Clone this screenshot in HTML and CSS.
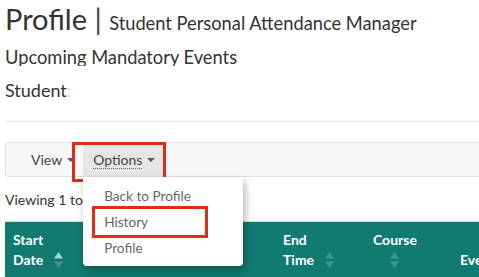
FILE: index.html
```html
<!DOCTYPE html>
<html lang="en">
<head>
    <meta charset="UTF-8">
    <title>Profile | Student Personal Attendance Manager</title>
    <link rel="stylesheet" href="styles.css">
</head>
<body>
    <div class="page">
        <h1 class="page-title">Profile <span class="sep">|</span> <small>Student Personal Attendance Manager</small></h1>
        <h4 class="section-title">Upcoming Mandatory Events</h4>
        <div class="student-line">Student<span class="colon">:</span></div>
        <hr class="rule">

        <div class="toolbar">
            <div class="tool">View <span class="caret"></span></div>
            <div class="tool active">
                <span class="dotted">Options</span> <span class="caret"></span>
                <span class="mark mark-options"></span>
                <ul class="dropdown">
                    <li>Back to Profile</li>
                    <li>History</li>
                    <li>Profile</li>
                    <span class="mark mark-history"></span>
                </ul>
            </div>
        </div>

        <div class="viewing">Viewing 1 to 1 of 1 entries</div>

        <div class="table-head">
            <div class="th c1">
                <span>Start<br>Date</span>
                <svg class="sort" width="9" height="16" viewBox="0 0 9 16"><path d="M4.5 0 L9 6.5 L0 6.5 Z" fill="#a6d6ce"/><path d="M4.5 16 L9 9.5 L0 9.5 Z" fill="#3e978c"/></svg>
            </div>
            <div class="th c3">
                <span>End<br>Time</span>
                <svg class="sort" width="9" height="16" viewBox="0 0 9 16"><path d="M4.5 0 L9 6.5 L0 6.5 Z" fill="#3e978c"/><path d="M4.5 16 L9 9.5 L0 9.5 Z" fill="#3e978c"/></svg>
            </div>
            <div class="th c4">
                <div class="stack">
                    <span>Course</span>
                    <svg class="sort" width="9" height="16" viewBox="0 0 9 16"><path d="M4.5 0 L9 6.5 L0 6.5 Z" fill="#3e978c"/><path d="M4.5 16 L9 9.5 L0 9.5 Z" fill="#3e978c"/></svg>
                </div>
            </div>
            <div class="th c5">
                <span>&nbsp;<br>Event</span>
            </div>
        </div>
    </div>
</body>
</html>
```
FILE: styles.css
```css
body {
    margin: 0;
    padding: 0;
    background: #fff;
    font-family: Lato, "Open Sans", sans-serif;
    color: #333;
    overflow: hidden;
}
.page {
    padding-left: 5px;
    overflow: hidden;
}
.page-title {
    margin: 0;
    padding-top: 2px;
    font-size: 29px;
    font-weight: 400;
    line-height: 34px;
    white-space: nowrap;
}
.page-title .sep {
    font-weight: 400;
    color: #444;
}
.page-title small {
    font-size: 18.3px;
}
.section-title {
    margin: 8px 0 0;
    font-size: 18.3px;
    font-weight: 400;
    line-height: 19px;
    height: 18px;
    overflow: hidden;
}
.student-line {
    margin-top: 14px;
    font-size: 18px;
    line-height: 20px;
}
.colon {
    color: #d4d4d4;
}
.rule {
    margin: 21px 0 0;
    border: 0;
    border-top: 1px solid #e6e6e6;
}

/* toolbar */
.toolbar {
    margin-top: 20px;
    height: 33px;
    background: #f7f7f7;
    border: 1px solid #e2e2e2;
    border-right: 0;
    border-radius: 4px 0 0 4px;
    display: flex;
    padding-left: 15px;
}
.tool {
    position: relative;
    display: flex;
    align-items: center;
    padding: 0 8px 0 10px;
    font-size: 14px;
    color: #444;
    white-space: nowrap;
}
.tool.active {
    background: #e6e6e6;
    padding: 0 11px 0 10px;
}
.caret {
    display: inline-block;
    width: 0;
    height: 0;
    margin-left: 5px;
    border-left: 4px solid transparent;
    border-right: 4px solid transparent;
    border-top: 4px solid #555;
}
.dotted {
    border-bottom: 1px dotted #666;
    line-height: 16px;
    margin-top: 2px;
}
.mark {
    position: absolute;
    border: 3px solid #e12c14;
    box-sizing: border-box;
}
.mark-options {
    left: -11px;
    top: -1px;
    width: 94px;
    height: 40px;
}
.dropdown {
    position: absolute;
    top: 34px;
    left: 0;
    width: 160px;
    margin: 0;
    padding: 6px 0 5px;
    list-style: none;
    background: #fff;
    border-radius: 0 0 4px 4px;
    box-shadow: 2px 4px 8px rgba(0, 0, 0, 0.3);
    z-index: 5;
}
.dropdown li {
    padding: 3px 21px;
    font-size: 13.6px;
    line-height: 20px;
    color: #666;
}
.mark-history {
    left: 9px;
    top: 29px;
    width: 116px;
    height: 32px;
}

.viewing {
    margin-top: 13px;
    font-size: 14px;
    line-height: 20px;
}

/* table header */
.table-head {
    margin-top: 11px;
    border-top: 1px solid #ddd;
    background: #127b71;
    display: flex;
    height: 60px;
    color: #fff;
    font-size: 14px;
    font-weight: 700;
    white-space: nowrap;
}
.th {
    box-sizing: border-box;
    flex-shrink: 0;
    display: flex;
    align-items: flex-start;
    padding: 8px 8px 0;
    line-height: 20px;
}
.sort {
    margin-left: 11px;
    margin-top: 22px;
}
.stack {
    display: flex;
    flex-direction: column;
    align-items: center;
}
.stack .sort {
    margin: 2px 0 0;
}
.c1 { width: 270px; }
.c3 { width: 90px; }
.c4 { width: 87px; }
.c5 { width: 80px; }
```
